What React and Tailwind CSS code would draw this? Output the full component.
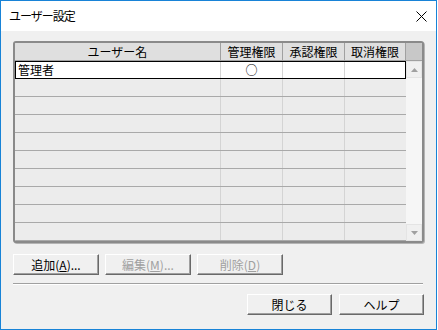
import React from "react";

const font = { fontFamily: '"Noto Sans CJK JP", "Liberation Sans", sans-serif' };

const rows = [
  { name: "管理者", admin: "○", approve: "", cancel: "" },
  ...Array.from({ length: 9 }, () => ({ name: "", admin: "", approve: "", cancel: "" })),
];

const Btn = ({ children, disabled, className = "" }) => (
  <button
    className={`h-[21px] flex items-center justify-center bg-[#f0f0f0] border border-t-white border-l-white border-r-[#696969] border-b-[#696969] shadow-[inset_-1px_-1px_0_#a0a0a0] text-[12px] leading-none ${
      disabled ? "text-[#a0a0a0]" : "text-black"
    } ${className}`}
  >
    {children}
  </button>
);

const Arrow = ({ down }) => (
  <svg width="7" height="4" viewBox="0 0 7 4">
    <path d={down ? "M0 0h7L3.5 4z" : "M0 4h7L3.5 0z"} fill="#a0a0a0" />
  </svg>
);

export default function App() {
  return (
    <div
      style={font}
      className="w-[437px] h-[330px] border border-[#1883d7] bg-[#f0f0f0] flex flex-col text-black"
    >
      {/* title bar */}
      <div className="h-[30px] bg-white flex items-center justify-between pl-[8px] pr-[9px]">
        <span className="text-[12px] tracking-[-1px]">ユーザー設定</span>
        <svg width="11" height="11" viewBox="0 0 11 11">
          <path d="M0.5 0.5L10.5 10.5M10.5 0.5L0.5 10.5" stroke="#000" strokeWidth="1" />
        </svg>
      </div>

      <div className="flex-1 flex flex-col px-[12px] pt-[10px]">
        {/* list view */}
        <div className="w-[411px] h-[202px] border-2 border-[#8a8a8a] rounded-[3px] shadow-[1px_1px_0_#b4b4b4] bg-[#ececec] flex text-[12px] leading-none overflow-hidden">
          <div className="flex flex-col w-[391px]">
            <div className="flex h-[18px] bg-[#dfdfdf] border-b border-[#a0a0a0]">
              <div className="w-[206px] flex items-center justify-center border-r border-[#a0a0a0]">ユーザー名</div>
              <div className="w-[62px] flex items-center justify-center border-r border-[#a0a0a0]">管理権限</div>
              <div className="w-[62px] flex items-center justify-center border-r border-[#a0a0a0]">承認権限</div>
              <div className="w-[61px] flex items-center justify-center border-r border-[#a0a0a0]">取消権限</div>
            </div>
            {rows.map((r, i) => (
              <div
                key={i}
                className={`flex h-[18px] border-b ${
                  i === 0 ? "bg-white border border-black border-b-black" : "border-[#a9a9a9]"
                }`}
              >
                <div className={`${i === 0 ? "w-[205px]" : "w-[206px]"} flex items-center pl-[2px] border-r border-[#d4d4d4]`}>
                  {r.name}
                </div>
                <div className="w-[62px] flex items-center justify-center border-r border-[#d4d4d4]">{r.admin}</div>
                <div className="w-[62px] flex items-center justify-center border-r border-[#d4d4d4]">{r.approve}</div>
                <div className={`${i === 0 ? "w-[60px]" : "w-[61px]"} flex items-center justify-center`}>{r.cancel}</div>
              </div>
            ))}
          </div>
          {/* scrollbar */}
          <div className="w-[16px] flex flex-col">
            <div className="h-[18px] bg-[#c8c8c8] border-b border-[#a0a0a0]" />
            <div className="flex-1 flex flex-col bg-[#f6f6f6]">
              <div className="h-[17px] bg-[#f0f0f0] border border-[#e4e4e4] flex items-center justify-center">
                <Arrow />
              </div>
              <div className="flex-1" />
              <div className="h-[17px] bg-[#f0f0f0] border border-[#e4e4e4] flex items-center justify-center">
                <Arrow down />
              </div>
            </div>
          </div>
        </div>

        {/* edit buttons */}
        <div className="flex gap-[6px] mt-[11px]">
          <Btn className="w-[86px]">
            追加(<span className="underline">A</span>)...
          </Btn>
          <Btn className="w-[86px]" disabled>
            編集(<span className="underline">M</span>)...
          </Btn>
          <Btn className="w-[86px]" disabled>
            削除(<span className="underline">D</span>)
          </Btn>
        </div>

        {/* separator */}
        <div className="mt-[8px] w-[410px] border-t border-[#a0a0a0] border-b border-b-white" />

        {/* dialog buttons */}
        <div className="flex justify-end gap-[7px] mt-[9px]">
          <Btn className="w-[85px]">閉じる</Btn>
          <Btn className="w-[85px]">ヘルプ</Btn>
        </div>
      </div>
    </div>
  );
}
